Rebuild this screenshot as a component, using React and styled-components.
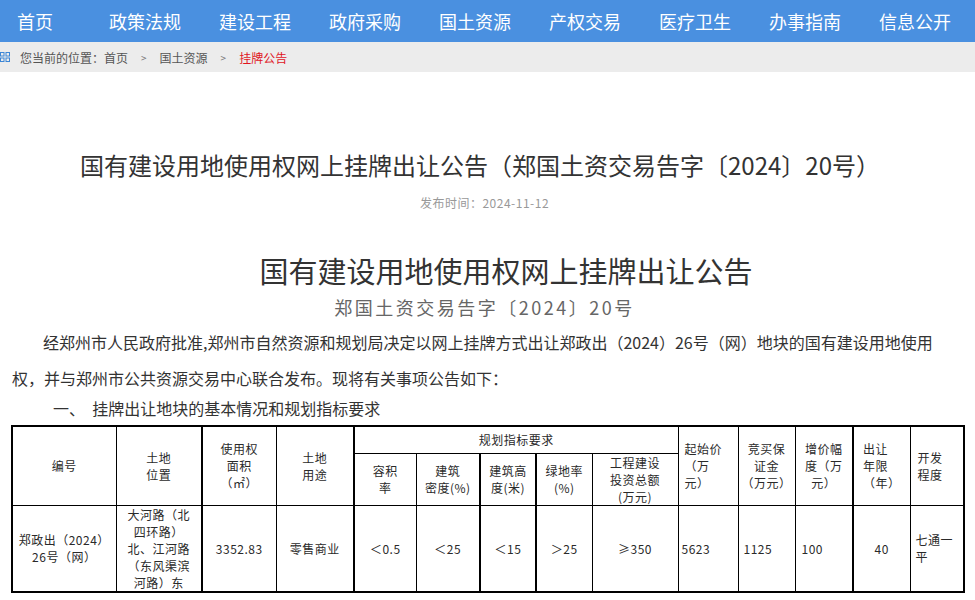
import React from "react";
import styled, { createGlobalStyle } from "styled-components";

const GlobalStyle = createGlobalStyle`
  html, body { margin: 0; padding: 0; background: #fff; }
  body { font-family: "Noto Sans CJK SC", "Noto Sans", sans-serif; color: #333; }
`;

const Page = styled.div`
  width: 975px;
`;

const Nav = styled.nav`
  display: flex;
  align-items: center;
  height: 42px;
  padding-left: 17px;
  background: #4a90e0;
`;

const NavItem = styled.a`
  font-size: 18px;
  line-height: 42px;
  color: #fff;
  text-decoration: none;
  white-space: nowrap;
  margin-right: ${(p) => (p.$first ? 56 : 38)}px;
`;

const Crumbs = styled.div`
  display: flex;
  align-items: center;
  height: 30px;
  background: #ececec;
  font-size: 12px;
  color: #555;
`;

const CrumbIcon = styled.svg`
  width: 10px;
  height: 10px;
  margin-right: 10px;
  flex: none;
`;

const Sep = styled.span`
  padding: 0 13px;
  font-size: 10px;
  color: #777;
`;

const Current = styled.span`
  color: #e0141e;
`;

const Article = styled.article`
  padding-top: 75px;
`;

const Title = styled.h1`
  margin: 0;
  padding-right: 15px;
  font-size: 24px;
  line-height: 36px;
  font-weight: normal;
  text-align: center;
  color: #333;
`;

const DateLine = styled.div`
  margin-top: 10px;
  padding-right: 6px;
  font-size: 12px;
  line-height: 20px;
  letter-spacing: 0.5px;
  color: #999;
  text-align: center;
`;

const Heading = styled.h2`
  margin: 37px 0 0;
  padding-left: 37px;
  font-size: 29px;
  line-height: 40px;
  font-weight: normal;
  text-align: center;
  color: #333;
`;

const SubHeading = styled.div`
  margin-top: 2px;
  padding-right: 6px;
  font-size: 18px;
  line-height: 30px;
  letter-spacing: 2.5px;
  text-align: center;
  color: #666;
`;

const Para = styled.p`
  margin: 2px 0 0;
  padding: 0 37px 0 12px;
  font-size: 16px;
  line-height: 36px;
  text-indent: 31px;
  color: #333;
`;

const Section = styled.p`
  margin: 0;
  padding-left: 53px;
  font-size: 16px;
  line-height: 24px;
  color: #333;
  white-space: pre;
`;

const Table = styled.table`
  margin: 5px 0 0 11px;
  width: 953px;
  table-layout: fixed;
  border-collapse: collapse;
  border: 2px solid #000;
  font-size: 12px;
  line-height: 17px;
  letter-spacing: 0.5px;
  color: #2a2a2a;
`;

const Row = styled.tr`
  height: ${(p) => p.$h}px;
`;

const Cell = styled.td`
  border: 1px solid #000;
  border-left-width: ${(p) => (p.$thick ? 2 : 1)}px;
  padding: 0 ${(p) => p.$pad ?? 3}px;
  text-align: ${(p) => p.$align || "center"};
  vertical-align: middle;
  white-space: nowrap;
  overflow: hidden;
`;

const widths = [104, 86, 74, 78, 62, 64, 56, 56, 86, 60, 57, 58, 57, 54];

const navItems = ["首页", "政策法规", "建设工程", "政府采购", "国土资源", "产权交易", "医疗卫生", "办事指南", "信息公开"];

const L = ({ lines }) =>
  lines.map((t, i) => (
    <React.Fragment key={i}>
      {i > 0 && <br />}
      {t}
    </React.Fragment>
  ));

export default function App() {
  return (
    <Page>
      <GlobalStyle />
      <Nav>
        {navItems.map((n, i) => (
          <NavItem key={n} $first={i === 0}>
            {n}
          </NavItem>
        ))}
      </Nav>
      <Crumbs>
        <CrumbIcon viewBox="0 0 10 10">
          <g fill="none" stroke="#3b86d6" strokeWidth="1">
            <rect x="0.5" y="0.5" width="3.5" height="3.5" />
            <rect x="6" y="0.5" width="3.5" height="3.5" />
            <rect x="0.5" y="6" width="3.5" height="3.5" />
            <rect x="6" y="6" width="3.5" height="3.5" />
          </g>
        </CrumbIcon>
        <span>您当前的位置：</span>
        <span>首页</span>
        <Sep>&gt;</Sep>
        <span>国土资源</span>
        <Sep>&gt;</Sep>
        <Current>挂牌公告</Current>
      </Crumbs>
      <Article>
        <Title>国有建设用地使用权网上挂牌出让公告（郑国土资交易告字〔2024〕20号）</Title>
        <DateLine>发布时间：2024-11-12</DateLine>
        <Heading>国有建设用地使用权网上挂牌出让公告</Heading>
        <SubHeading>郑国土资交易告字〔2024〕20号</SubHeading>
        <Para>
          经郑州市人民政府批准,郑州市自然资源和规划局决定以网上挂牌方式出让郑政出（2024）26号（网）地块的国有建设用地使用权，并与郑州市公共资源交易中心联合发布。现将有关事项公告如下：
        </Para>
        <Section>{"一、  挂牌出让地块的基本情况和规划指标要求"}</Section>
        <Table>
          <colgroup>
            {widths.map((w, i) => (
              <col key={i} style={{ width: w }} />
            ))}
          </colgroup>
          <tbody>
            <Row $h={27}>
              <Cell rowSpan={2}>编号</Cell>
              <Cell rowSpan={2}><L lines={["土地", "位置"]} /></Cell>
              <Cell rowSpan={2} $thick><L lines={["使用权", "面积", "（㎡）"]} /></Cell>
              <Cell rowSpan={2}><L lines={["土地", "用途"]} /></Cell>
              <Cell colSpan={5} $thick>规划指标要求</Cell>
              <Cell rowSpan={2} $align="left" $pad={6}><L lines={["起始价", "（万", "元）"]} /></Cell>
              <Cell rowSpan={2}><L lines={["竞买保", "证金", "（万元）"]} /></Cell>
              <Cell rowSpan={2}><L lines={["增价幅", "度（万", "元）"]} /></Cell>
              <Cell rowSpan={2} $align="left" $pad={9} $thick><L lines={["出让", "年限", "（年）"]} /></Cell>
              <Cell rowSpan={2} $align="left" $pad={7}><L lines={["开发", "程度"]} /></Cell>
            </Row>
            <Row $h={51}>
              <Cell $thick><L lines={["容积", "率"]} /></Cell>
              <Cell><L lines={["建筑", "密度(%)"]} /></Cell>
              <Cell $thick><L lines={["建筑高", "度(米)"]} /></Cell>
              <Cell $thick><L lines={["绿地率", "(%)"]} /></Cell>
              <Cell><L lines={["工程建设", "投资总额", "(万元)"]} /></Cell>
            </Row>
            <Row $h={85}>
              <Cell><L lines={["郑政出（2024）", "26号（网）"]} /></Cell>
              <Cell><L lines={["大河路（北", "四环路）", "北、江河路", "（东风渠滨", "河路）东"]} /></Cell>
              <Cell $thick>3352.83</Cell>
              <Cell>零售商业</Cell>
              <Cell $thick>＜0.5</Cell>
              <Cell>＜25</Cell>
              <Cell $thick>＜15</Cell>
              <Cell $thick>＞25</Cell>
              <Cell>≥350</Cell>
              <Cell $align="left" $pad={3}>5623</Cell>
              <Cell $align="left" $pad={5}>1125</Cell>
              <Cell $align="left" $pad={6}>100</Cell>
              <Cell $thick>40</Cell>
              <Cell $align="left" $pad={5}><L lines={["七通一", "平"]} /></Cell>
            </Row>
          </tbody>
        </Table>
      </Article>
    </Page>
  );
}
